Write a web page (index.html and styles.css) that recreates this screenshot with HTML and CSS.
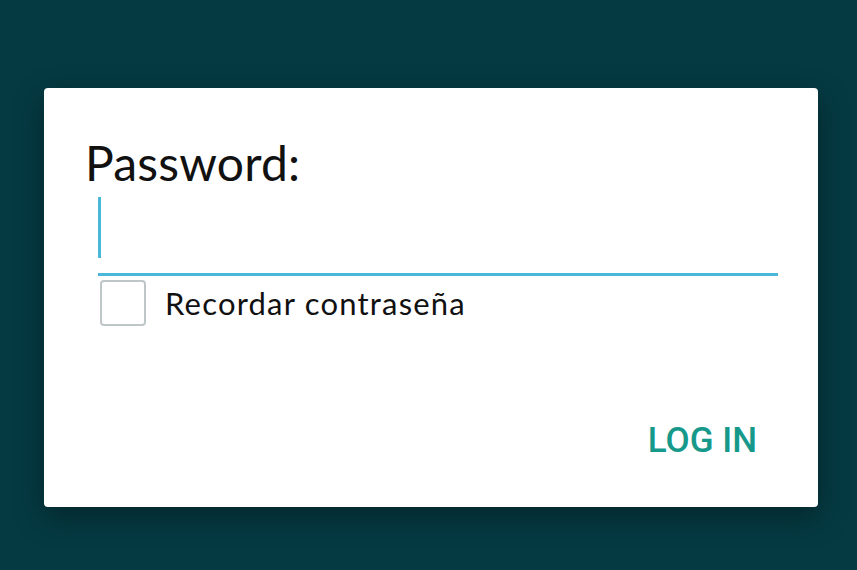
FILE: index.html
```html
<!DOCTYPE html>
<html lang="es">
<head>
<meta charset="utf-8">
<title>Login</title>
<link rel="stylesheet" href="styles.css">
</head>
<body>
<div class="stage">
  <div class="card">
    <div class="label">Password:</div>
    <div class="field"><span class="caret"></span></div>
    <div class="remember">
      <span class="box"></span>
      <span class="remember-text">Recordar contraseña</span>
    </div>
    <div class="actions">
      <span class="login">LOG IN</span>
    </div>
  </div>
</div>
</body>
</html>
```
FILE: styles.css
```css
html, body {
  margin: 0;
  padding: 0;
  height: 100%;
}
body {
  background: #053a42;
  font-family: Lato, "Noto Sans", sans-serif;
  overflow: hidden;
}
.stage {
  padding: 88px 39px 0 44px;
}
.card {
  box-sizing: border-box;
  width: 774px;
  height: 419px;
  background: #ffffff;
  border-radius: 4px;
  box-shadow: 0 10px 30px rgba(0, 0, 0, 0.35);
  padding: 51px 40px 0 41px;
}
.label {
  font-size: 48px;
  line-height: 48px;
  color: #111;
  letter-spacing: 0.2px;
}
.field {
  margin-left: 13px;
  border-bottom: 3px solid #4ab8d8;
  padding-top: 10px;
  height: 76px;
}
.caret {
  display: block;
  width: 3px;
  height: 61px;
  margin-left: 0;
  background: #4ab8d8;
}
.remember {
  display: flex;
  align-items: center;
  margin-top: 4px;
  margin-left: 15px;
}
.box {
  box-sizing: border-box;
  width: 46px;
  height: 46px;
  border: 2px solid #bfc6c8;
  border-radius: 4px;
}
.remember-text {
  margin-left: 19px;
  font-size: 31px;
  line-height: 36px;
  color: #111;
  letter-spacing: 1.2px;
}
.actions {
  display: flex;
  justify-content: flex-end;
  margin-top: 97px;
  padding-right: 21px;
}
.login {
  font-family: Roboto, sans-serif;
  font-weight: 500;
  font-size: 35px;
  line-height: 35px;
  color: #16998a;
}
```
